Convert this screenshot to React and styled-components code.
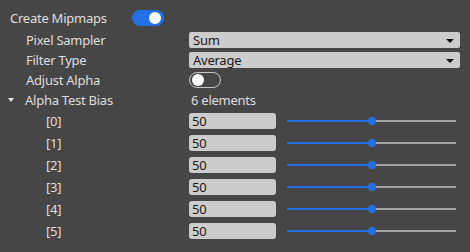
import React from "react";
import styled, { createGlobalStyle } from "styled-components";

const Global = createGlobalStyle`
  html, body { margin: 0; padding: 0; background: #464646; }
  body { font-family: "Noto Sans", "Open Sans", sans-serif; font-size: 13px; letter-spacing: -0.25px; color: #dedede; }
`;

const Page = styled.div`
  width: 470px;
  height: 252px;
  box-sizing: border-box;
  padding: 8px 10px 0 10px;
  background: #464646;
  display: flex;
  flex-direction: column;
`;

const Row = styled.div`
  display: grid;
  grid-template-columns: 179px 1fr;
  align-items: center;
  height: ${(p) => p.$h || 20}px;
  margin-top: ${(p) => p.$mt || 0}px;
`;

const HeaderRow = styled.div`
  display: flex;
  align-items: center;
  height: 20px;
`;

const Label = styled.div`
  padding-left: ${(p) => p.$indent || 0}px;
  display: flex;
  align-items: center;
  white-space: nowrap;
  line-height: 16px;
`;

const HeaderLabel = styled(Label)`
  width: 122px;
`;

const Caret = styled.span`
  width: 0;
  height: 0;
  border-left: 3.5px solid transparent;
  border-right: 3.5px solid transparent;
  border-top: 4px solid #e8e8e8;
  margin-left: -2px;
  margin-right: 11px;
`;

const Toggle = styled.div`
  width: 32px;
  height: 16px;
  box-sizing: border-box;
  border-radius: 8px;
  background: ${(p) => (p.$on ? "#2370e6" : "transparent")};
  border: ${(p) => (p.$on ? "none" : "1px solid #c8c8c8")};
  display: flex;
  align-items: center;
  justify-content: ${(p) => (p.$on ? "flex-end" : "flex-start")};
  padding: 0 ${(p) => (p.$on ? 3 : 2)}px;
  &::after {
    content: "";
    width: 12px;
    height: 12px;
    border-radius: 50%;
    background: #ffffff;
  }
`;

const Select = styled.div`
  height: 16px;
  background: #cccccc;
  border-radius: 2px;
  color: #1a1a1a;
  display: flex;
  align-items: center;
  justify-content: space-between;
  padding: 0 6px 0 4px;
  line-height: 16px;
`;

const Arrow = styled.span`
  width: 0;
  height: 0;
  border-left: 4px solid transparent;
  border-right: 4px solid transparent;
  border-top: 4px solid #111;
  margin-top: 1px;
`;

const Value = styled.div`
  padding-left: 2px;
  line-height: 16px;
`;

const NumberField = styled.div`
  width: 87px;
  height: 16px;
  box-sizing: border-box;
  background: #cccccc;
  border-radius: 3px;
  color: #1a1a1a;
  padding-left: 3px;
  line-height: 16px;
`;

const ElementValue = styled.div`
  display: flex;
  align-items: center;
  gap: 11px;
`;

const Slider = styled.div`
  position: relative;
  width: 169px;
  height: 2px;
  background: #a3a3a3;
`;

const Fill = styled.div`
  height: 2px;
  background: #2370e6;
`;

const Thumb = styled.div`
  position: absolute;
  top: -3px;
  width: 8px;
  height: 8px;
  margin-left: -4px;
  border-radius: 50%;
  background: #2370e6;
`;

const elements = [50, 50, 50, 50, 50, 50];

export default function App() {
  return (
    <>
      <Global />
      <Page>
        <HeaderRow>
          <HeaderLabel>Create Mipmaps</HeaderLabel>
          <Toggle $on />
        </HeaderRow>
        <Row $mt={2}>
          <Label $indent={16}>Pixel Sampler</Label>
          <Select>
            <span>Sum</span>
            <Arrow />
          </Select>
        </Row>
        <Row>
          <Label $indent={16}>Filter Type</Label>
          <Select>
            <span>Average</span>
            <Arrow />
          </Select>
        </Row>
        <Row>
          <Label $indent={16}>Adjust Alpha</Label>
          <div>
            <Toggle />
          </div>
        </Row>
        <Row>
          <Label>
            <Caret />
            Alpha Test Bias
          </Label>
          <Value>6 elements</Value>
        </Row>
        {elements.map((v, i) => (
          <Row key={i} $h={22}>
            <Label $indent={36}>[{i}]</Label>
            <ElementValue>
              <NumberField>{v}</NumberField>
              <Slider>
                <Fill style={{ width: `${v}%` }} />
                <Thumb style={{ left: `${v}%` }} />
              </Slider>
            </ElementValue>
          </Row>
        ))}
      </Page>
    </>
  );
}
